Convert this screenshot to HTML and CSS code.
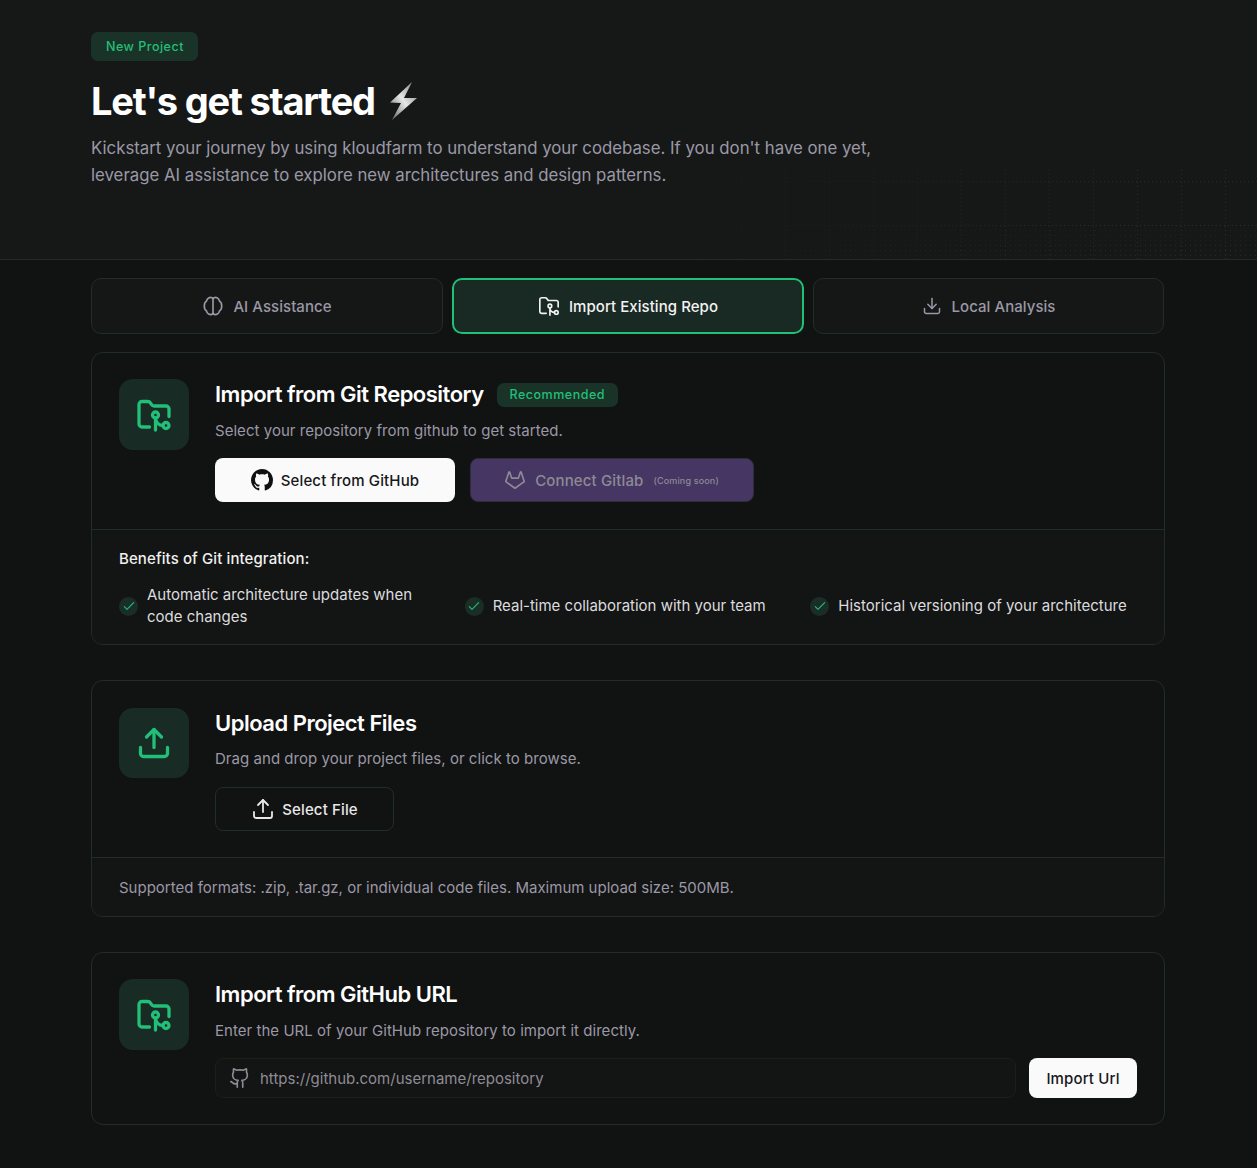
FILE: index.html
```html
<!DOCTYPE html>
<html lang="en">
<head>
    <meta charset="UTF-8">
    <meta name="viewport" content="width=device-width, initial-scale=1.0">
    <title>New Project</title>
    <link rel="stylesheet" href="styles.css">
</head>
<body>

<!-- Icon sprite -->
<svg class="sprite" xmlns="http://www.w3.org/2000/svg">
    <symbol id="i-folder-git" viewBox="0 0 24 24">
        <path d="M9 20H4a2 2 0 0 1-2-2V5a2 2 0 0 1 2-2h3.900a2 2 0 0 1 1.690.9l.81 1.200a2 2 0 0 0 1.670.9H20a2 2 0 0 1 2 2v5"/>
        <circle cx="13" cy="12" r="2"/>
        <path d="M18 19c-2.800 0-5-2.200-5-5v8"/>
        <circle cx="20" cy="19" r="2"/>
    </symbol>
    <symbol id="i-upload" viewBox="0 0 24 24">
        <path d="M21 15v4a2 2 0 0 1-2 2H5a2 2 0 0 1-2-2v-4"/>
        <path d="M17 8l-5-5-5 5"/>
        <path d="M12 3v12"/>
    </symbol>
    <symbol id="i-download" viewBox="0 0 24 24">
        <path d="M21 15v4a2 2 0 0 1-2 2H5a2 2 0 0 1-2-2v-4"/>
        <path d="M7 10l5 5 5-5"/>
        <path d="M12 15V3"/>
    </symbol>
    <symbol id="i-check" viewBox="0 0 24 24">
        <path d="M5 13l4 4L19 7"/>
    </symbol>
</svg>

<!-- Header -->
<div class="hero">
    <span class="pill">New Project</span>
    <h1>Let's get started
        <svg class="bolt" viewBox="0 0 30 40" xmlns="http://www.w3.org/2000/svg">
            <defs>
                <linearGradient id="bolt-fill" x1="0.1" y1="0.9" x2="0.9" y2="0.1">
                    <stop offset="0" stop-color="#77787a"/>
                    <stop offset="0.5" stop-color="#e6e6e6"/>
                    <stop offset="1" stop-color="#8f9092"/>
                </linearGradient>
            </defs>
            <path d="M24 1 L2 21.500 L13 22 L4 39 L29 17 L16 17 Z" fill="url(#bolt-fill)"/>
        </svg>
    </h1>
    <p>Kickstart your journey by using kloudfarm to understand your codebase. If you don't have one yet, leverage AI assistance to explore new architectures and design patterns.</p>
</div>

<div class="container">
    <!-- Tabs -->
    <div class="tabs">
        <div class="tab">
            <svg class="icon" viewBox="0 0 24 24">
                <path d="M12 4v17"/>
                <path d="M12 4c-1.200-1.300-3.400-1.500-4.800-.7C5.800 4 5.200 5.200 5 6.500 3.300 7.400 2.500 9.500 2.500 12s.8 4.600 2.500 5.500c.2 1.300.8 2.500 2.200 3.200 1.400.8 3.600.6 4.800-.7 1.200 1.300 3.400 1.500 4.800.7 1.400-.7 2-1.900 2.200-3.200 1.700-.9 2.500-3 2.500-5.500s-.8-4.600-2.500-5.500c-.2-1.300-.8-2.500-2.200-3.200C15.400 2.500 13.200 2.700 12 4Z"/>
            </svg>
            AI Assistance
        </div>
        <div class="tab tab-active">
            <svg class="icon"><use href="#i-folder-git"/></svg>
            Import Existing Repo
        </div>
        <div class="tab tab-local">
            <svg class="icon"><use href="#i-download"/></svg>
            Local Analysis
        </div>
    </div>

    <!-- Git card -->
    <div class="card">
        <div class="card-main">
            <div class="card-icon"><svg><use href="#i-folder-git"/></svg></div>
            <div class="card-body">
                <div class="card-title">
                    <h2>Import from Git Repository</h2>
                    <span class="pill pill-small">Recommended</span>
                </div>
                <p class="card-desc">Select your repository from github to get started.</p>
                <div class="actions">
                    <button class="btn btn-white btn-github">
                        <svg class="gh-mark" viewBox="0 0 16 16"><path d="M8 0C3.580 0 0 3.580 0 8c0 3.540 2.290 6.530 5.470 7.590.4.07.55-.17.55-.38 0-.19-.01-.82-.01-1.490-2.010.37-2.530-.49-2.690-.94-.09-.23-.48-.94-.82-1.130-.28-.15-.68-.52-.01-.53.63-.01 1.080.58 1.230.82.72 1.210 1.870.87 2.330.66.07-.52.28-.87.51-1.070-1.780-.2-3.640-.89-3.640-3.950 0-.87.31-1.590.82-2.150-.08-.2-.36-1.020.08-2.120 0 0 .67-.21 2.200.82.64-.18 1.320-.27 2-.27.68 0 1.360.09 2 .27 1.530-1.040 2.200-.82 2.200-.82.44 1.100.16 1.920.08 2.120.51.56.82 1.270.82 2.150 0 3.070-1.870 3.750-3.650 3.950.29.25.54.73.54 1.480 0 1.070-.01 1.930-.01 2.200 0 .21.15.46.55.38A8.013 8.013 0 0016 8c0-4.420-3.580-8-8-8z"/></svg>
                        Select from GitHub
                    </button>
                    <button class="btn btn-gitlab">
                        <svg class="icon" viewBox="0 0 24 24"><path d="m22 13.290-3.330-10a.42.42 0 0 0-.14-.18.38.38 0 0 0-.22-.11.39.39 0 0 0-.23.07.42.42 0 0 0-.14.18l-2.260 6.670H8.320L6.100 3.260a.42.42 0 0 0-.1-.18.38.38 0 0 0-.26-.08.39.39 0 0 0-.23.07.42.42 0 0 0-.14.18L2 13.290a.74.74 0 0 0 .27.83L12 21l9.690-6.880a.71.71 0 0 0 .31-.83Z"/></svg>
                        Connect Gitlab
                        <small>(Coming soon)</small>
                    </button>
                </div>
            </div>
        </div>
        <div class="card-foot">
            <h3>Benefits of Git integration:</h3>
            <ul class="benefits">
                <li><span class="tick"><svg><use href="#i-check"/></svg></span>Automatic architecture updates when code changes</li>
                <li><span class="tick"><svg><use href="#i-check"/></svg></span>Real-time collaboration with your team</li>
                <li><span class="tick"><svg><use href="#i-check"/></svg></span>Historical versioning of your architecture</li>
            </ul>
        </div>
    </div>

    <!-- Upload card -->
    <div class="card card-upload">
        <div class="card-main">
            <div class="card-icon"><svg><use href="#i-upload"/></svg></div>
            <div class="card-body">
                <div class="card-title">
                    <h2>Upload Project Files</h2>
                </div>
                <p class="card-desc">Drag and drop your project files, or click to browse.</p>
                <div class="actions">
                    <button class="btn btn-outline">
                        <svg class="icon"><use href="#i-upload"/></svg>
                        Select File
                    </button>
                </div>
            </div>
        </div>
        <div class="card-foot card-foot-note">Supported formats: .zip, .tar.gz, or individual code files. Maximum upload size: 500MB.</div>
    </div>

    <!-- URL card -->
    <div class="card">
        <div class="card-main">
            <div class="card-icon"><svg><use href="#i-folder-git"/></svg></div>
            <div class="card-body">
                <div class="card-title">
                    <h2>Import from GitHub URL</h2>
                </div>
                <p class="card-desc">Enter the URL of your GitHub repository to import it directly.</p>
                <div class="url-row">
                    <div class="url-input">
                        <svg class="icon" viewBox="0 0 24 24">
                            <path d="M15 22v-4a4.800 4.800 0 0 0-1-3.500c3 0 6-2 6-5.500.08-1.250-.27-2.480-1-3.500.28-1.150.28-2.350 0-3.500 0 0-1 0-3 1.500-2.640-.5-5.360-.5-8 0C6 2 5 2 5 2c-.3 1.150-.3 2.350 0 3.500A5.403 5.403 0 0 0 4 9c0 3.500 3 5.500 6 5.500-.39.49-.68 1.050-.85 1.650-.17.6-.22 1.230-.15 1.850v4"/>
                            <path d="M9 18c-4.510 2-5-2-7-2"/>
                        </svg>
                        https://github.com/username/repository
                    </div>
                    <button class="btn btn-white btn-import">Import Url</button>
                </div>
            </div>
        </div>
    </div>
</div>

</body>
</html>
```

FILE: styles.css
```css
/* Global Reset */
*, *::before, *::after {
    margin: 0;
    padding: 0;
    box-sizing: border-box;
}

:root {
    --green: #22bf78;
    --green-soft: #1a3329;
    --line: #1f2e29;
    --muted: #9b98a6;
    --text: #e8e8ea;
}

body {
    font-family: 'Inter', sans-serif;
    background-color: #111212;
    color: var(--text);
    min-height: 100vh;
}

.sprite {
    display: none;
}

.icon {
    width: 22px;
    height: 22px;
    fill: none;
    stroke: currentColor;
    stroke-width: 1.800;
    stroke-linecap: round;
    stroke-linejoin: round;
    flex-shrink: 0;
}

/* Header */
.hero {
    position: relative;
    height: 260px;
    padding: 32px 91px 0;
    background-color: #161818;
    border-bottom: 1px solid #232a28;
}

/* Dotted grid lines */
.hero::after {
    content: '';
    position: absolute;
    inset: 170px 0 0 0;
    background-image:
        conic-gradient(from 270deg at 1px 1px, rgba(255, 255, 255, 0.08) 90deg, transparent 0),
        conic-gradient(from 270deg at 1px 1px, rgba(255, 255, 255, 0.08) 90deg, transparent 0);
    background-size: 4px 44px, 44px 4px;
    background-position: 0 11px, 37px 0;
    -webkit-mask-image: linear-gradient(95deg, transparent 45%, #000 90%);
    mask-image: linear-gradient(95deg, transparent 45%, #000 90%);
    pointer-events: none;
}

/* Dot field in the bottom right corner */
.hero::before {
    content: '';
    position: absolute;
    inset: 210px 0 0 700px;
    background-image: conic-gradient(from 270deg at 1px 1px, rgba(255, 255, 255, 0.08) 90deg, transparent 0);
    background-size: 5px 5px;
    -webkit-mask-image: radial-gradient(ellipse at 100% 100%, #000 10%, transparent 75%);
    mask-image: radial-gradient(ellipse at 100% 100%, #000 10%, transparent 75%);
    pointer-events: none;
}

.pill {
    display: inline-block;
    padding: 0 14px 0 15px;
    height: 29px;
    line-height: 29px;
    font-size: 12.500px;
    font-weight: 500;
    letter-spacing: 0.5px;
    color: var(--green);
    background-color: var(--green-soft);
    border-radius: 7px;
}

.hero h1 {
    display: flex;
    align-items: center;
    gap: 13px;
    margin-top: 14px;
    height: 52px;
    font-size: 38px;
    font-weight: 700;
    letter-spacing: -1.200px;
    color: #fff;
}

.bolt {
    width: 30px;
    height: 40px;
}

.hero p {
    max-width: 800px;
    margin-top: 8px;
    font-size: 16.800px;
    line-height: 27px;
    color: var(--muted);
}

/* Tabs */
.container {
    width: 1074px;
    margin-left: 91px;
}

.tabs {
    display: grid;
    grid-template-columns: 352px 352px 351px;
    gap: 9px;
    margin-top: 18px;
}

.tab {
    display: flex;
    align-items: center;
    justify-content: center;
    gap: 9px;
    height: 56px;
    font-size: 15px;
    font-weight: 500;
    letter-spacing: 0.05px;
    color: var(--muted);
    background-color: #151717;
    border: 1px solid var(--line);
    border-radius: 10px;
}

.tab-active {
    color: #f2f2f2;
    background-color: #192923;
    border: 2px solid var(--green);
}

.tab-local {
    gap: 10px;
}

.tab-local .icon {
    width: 20px;
    height: 20px;
}

/* Cards */
.card {
    margin-top: 35px;
    border: 1px solid var(--line);
    border-radius: 12px;
}

.tabs + .card {
    margin-top: 18px;
}

.card-main {
    display: flex;
    gap: 26px;
    padding: 26px 27px;
}

.card-icon {
    display: flex;
    align-items: center;
    justify-content: center;
    flex-shrink: 0;
    width: 70px;
    height: 71px;
    background-color: #182b24;
    border-radius: 14px;
}

.card-icon svg {
    width: 36px;
    height: 36px;
    fill: none;
    stroke: var(--green);
    stroke-width: 2.200;
    stroke-linecap: round;
    stroke-linejoin: round;
}

.card-body {
    flex: 1;
}

.card-title {
    display: flex;
    align-items: center;
    gap: 13px;
    height: 30px;
}

.card-title h2 {
    font-size: 22px;
    font-weight: 600;
    letter-spacing: -0.5px;
    color: #fff;
}

.pill-small {
    height: 24px;
    line-height: 24px;
    margin-top: 2px;
    padding: 0 13px;
}

.card-desc {
    margin-top: 11px;
    font-size: 15px;
    line-height: 22px;
    letter-spacing: 0.04px;
    color: var(--muted);
}

.actions {
    display: flex;
    gap: 14.500px;
    margin-top: 16px;
}

/* Upload card sits a pixel lower inside its box */
.card-upload .card-main {
    padding-top: 27px;
}

.card-upload .card-icon {
    height: 70px;
}

.card-upload .card-desc {
    margin-top: 10px;
}

.card-upload .actions {
    margin-top: 17px;
}

/* Buttons */
.btn {
    display: flex;
    align-items: center;
    justify-content: center;
    gap: 8px;
    height: 44px;
    font-family: inherit;
    font-size: 15px;
    font-weight: 500;
    letter-spacing: 0.14px;
    border: none;
    border-radius: 8px;
}

.btn-white {
    color: #17171a;
    background-color: #fafafa;
}

.btn-github {
    width: 240px;
}

.gh-mark {
    width: 22px;
    height: 22px;
    fill: #111;
}

.btn-gitlab {
    width: 284px;
    gap: 9px;
    color: #8d8b93;
    background-color: #453663;
    border: 1px solid #2f2c3d;
}

.btn-gitlab small {
    margin-left: 1px;
    font-size: 9px;
    letter-spacing: 0.15px;
}

.btn-outline {
    width: 179px;
    gap: 7px;
    color: #e8e8ea;
    background-color: transparent;
    border: 1px solid var(--line);
}

.btn-outline .icon {
    width: 24px;
    height: 24px;
}

/* Card footer */
.card-foot {
    margin-top: 1px;
    padding: 19px 27px 16px;
    border-top: 1px solid var(--line);
    background-color: #131414;
    border-radius: 0 0 12px 12px;
}

.card-foot-note {
    margin-top: 0;
    padding: 19px 27px 17px;
    font-size: 15px;
    line-height: 22px;
    color: var(--muted);
}

.card-foot h3 {
    font-size: 15px;
    font-weight: 500;
    line-height: 20px;
    letter-spacing: 0.1px;
    color: #f0f0f0;
}

.benefits {
    display: grid;
    grid-template-columns: repeat(3, 1fr);
    gap: 19px;
    margin-top: 15px;
    list-style: none;
}

.benefits li {
    display: flex;
    align-items: center;
    gap: 9px;
    font-size: 15px;
    line-height: 22px;
    color: #dcdcdf;
}

.tick {
    display: flex;
    align-items: center;
    justify-content: center;
    flex-shrink: 0;
    width: 19px;
    height: 19px;
    background-color: #1a2e27;
    border-radius: 50%;
}

.tick svg {
    width: 16px;
    height: 16px;
    fill: none;
    stroke: var(--green);
    stroke-width: 1.600;
    stroke-linecap: round;
    stroke-linejoin: round;
}

/* URL row */
.url-row {
    display: flex;
    gap: 13px;
    margin-top: 16px;
}

.url-input {
    display: flex;
    align-items: center;
    gap: 9px;
    flex: 1;
    height: 40px;
    padding: 0 13px;
    font-size: 15px;
    color: #8e8c96;
    background-color: #131414;
    border: 1px solid #1a1f1d;
    border-radius: 8px;
}

.btn-import {
    width: 108px;
    height: 40px;
}
```
